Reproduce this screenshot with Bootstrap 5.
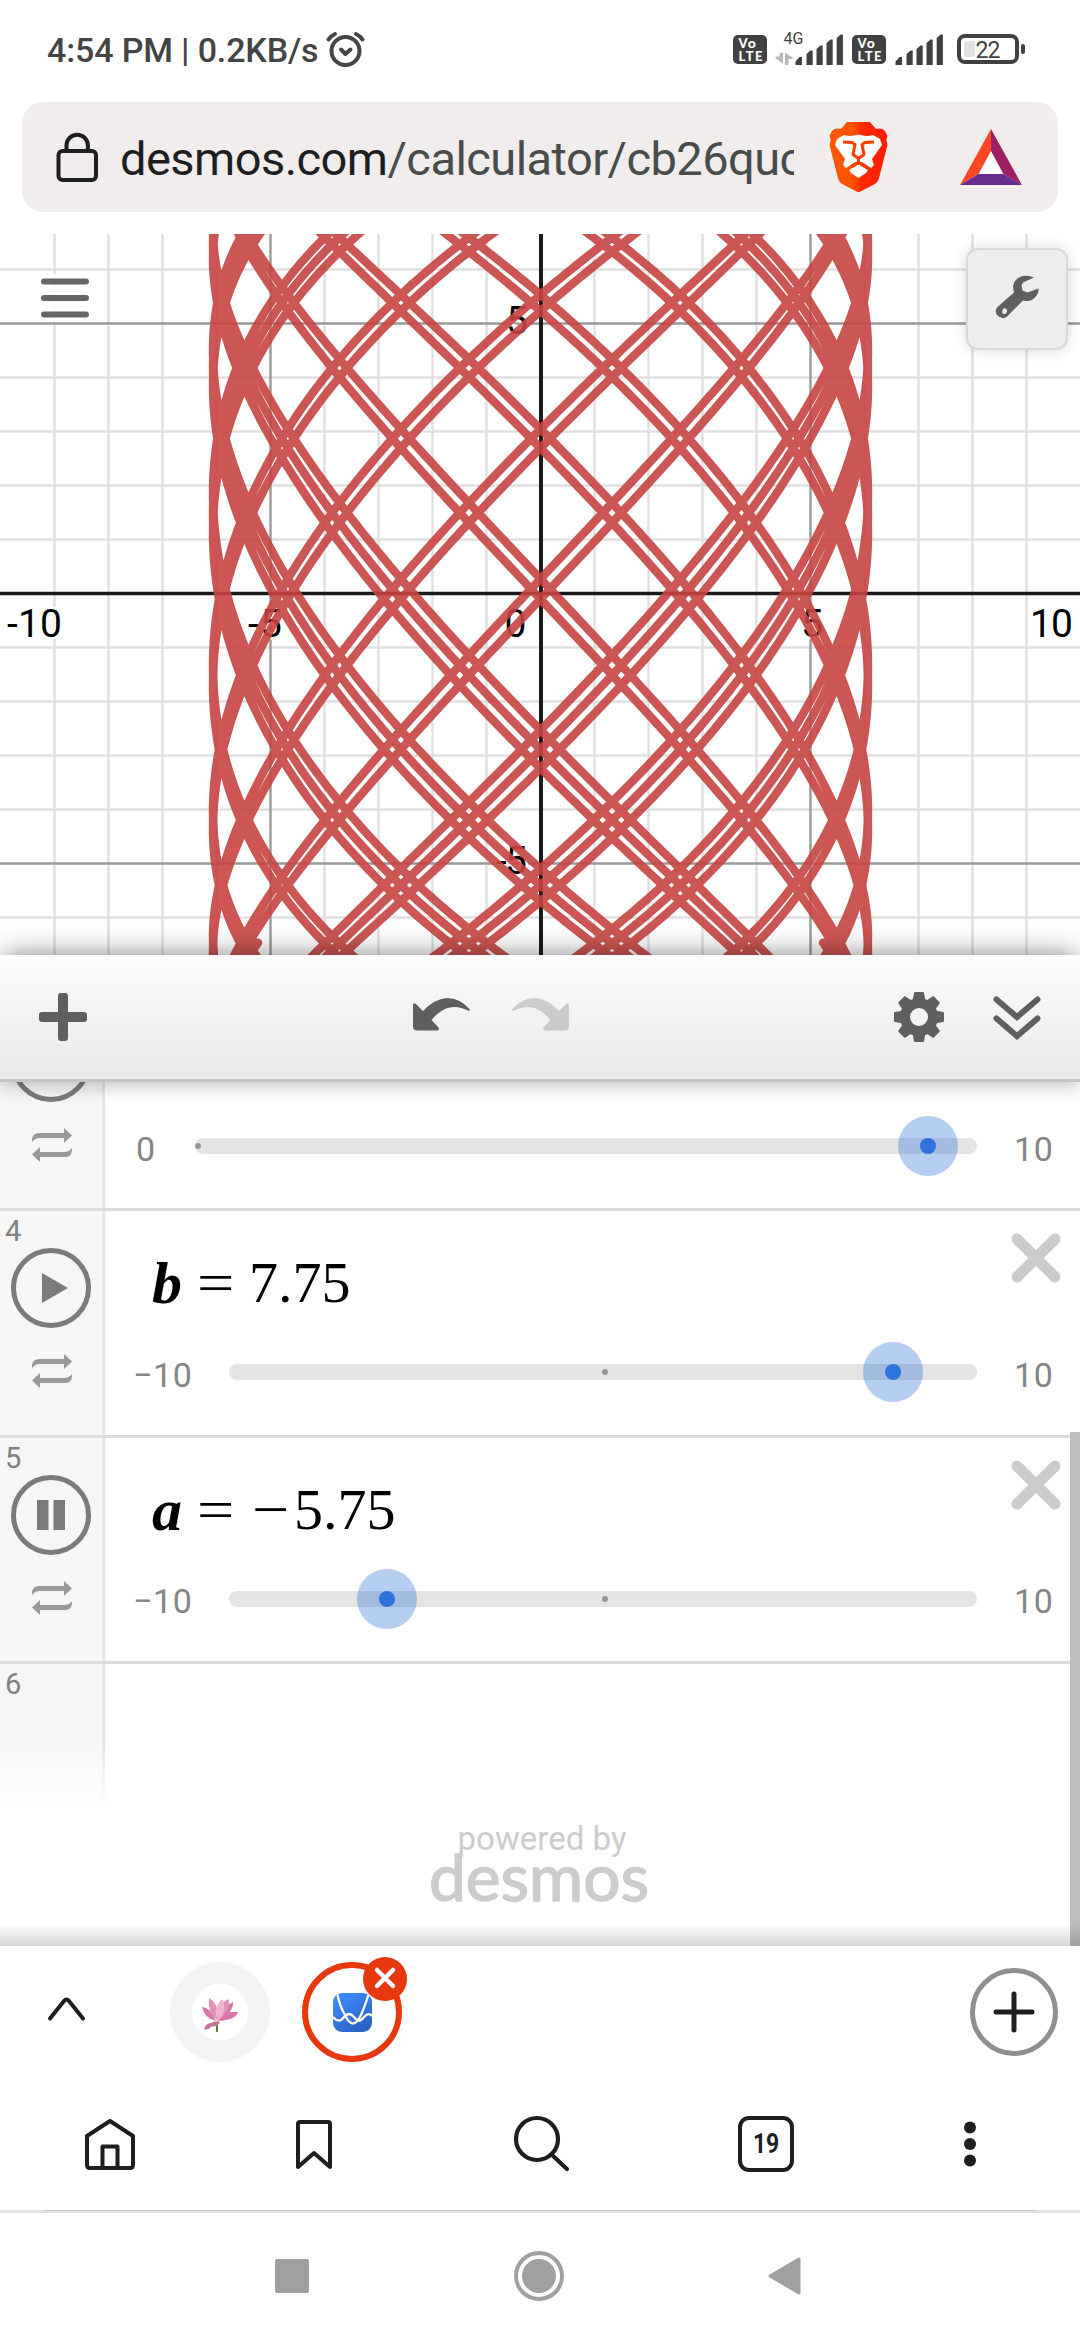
<!DOCTYPE html>
<html lang="en">
<head>
<meta charset="utf-8">
<meta name="viewport" content="width=device-width, initial-scale=1">
<title>Desmos | Graphing Calculator</title>
<link href="https://cdn.jsdelivr.net/npm/bootstrap@5.3.0/dist/css/bootstrap.min.css" rel="stylesheet">
<style>
  body { font-family: Roboto, "Noto Sans", sans-serif; background: #fff; width: 1080px; height: 2340px; overflow: hidden; line-height: 1; }
  svg { display: block; flex: none; overflow: visible; }
  .statusbar { height: 102px; padding: 0 54px 0 47px; color: #444; }
  .clock { font-size: 34px; font-weight: 500; width: 279px; white-space: nowrap; letter-spacing: -.15px; padding-bottom: 2px; }
  .urlbar { height: 110px; margin: 0 22px; border-radius: 21px; background: #f0edec; padding-left: 34px; }
  .urltext { width: 674px; margin-left: 22px; font-size: 47px; color: #484c4b; white-space: nowrap; overflow: hidden; line-height: 64px; letter-spacing: -.55px; padding-top: 3px; }
  .urltext b { font-weight: 400; color: #1e1e1e; }
  .graph { height: 721px; margin-top: 22px; position: relative; overflow: hidden; }
  .graph::after { content: ""; position: absolute; left: 8px; right: 8px; bottom: -24px; height: 24px; box-shadow: 0 0 26px 4px rgba(0,0,0,.34); }
  .menu-btn { position: absolute; left: 41px; top: 44px; }
  .wrench { position: absolute; left: 966px; top: 14px; width: 102px; height: 102px; border: 2px solid #d8d8d8; border-radius: 12px; background: #ededed; box-shadow: 0 0 14px rgba(0,0,0,.16); }
  .toolbar { height: 127px; background: linear-gradient(#fcfcfc, #e8e8e8); border-bottom: 3px solid #c4c4c4; box-shadow: 0 6px 16px rgba(0,0,0,.2); position: relative; z-index: 2; padding: 0 39px; }
  .pane { height: 864px; overflow: hidden; position: relative; }
  .exprs { margin-top: -97px; }
  .expr { height: 226.3px; border-bottom: 3px solid #dcdcdc; }
  .gutter { width: 105px; background: #f6f6f6; border-right: 3px solid #e6e6e6; color: #808080; flex: none; }
  .num { font-size: 29px; height: 37px; padding: 6px 0 0 5px; }
  .playb { width: 80px; height: 80px; border: 5px solid #7b7b7b; margin-left: 11px; }
  .latex { height: 130px; padding-left: 47px; font-family: "Liberation Serif", serif; font-size: 58px; color: #000; line-height: 58px; }
  .latex .v { font-weight: 700; font-style: italic; font-size: 60px; width: 45px; }
  .latex .eq { width: 52px; }
  .latex .neg { width: 45px; }
  .latex .eq span, .latex .neg span { display: inline-block; transform: scaleX(1.14); transform-origin: 0 50%; }
  .latex .neg span { margin-left: 3px; }
  .slider { height: 62px; font-size: 34px; color: #858585; }
  .lab { padding-top: 5px; letter-spacing: .6px; white-space: nowrap; }
  .trackbar { height: 16px; border-radius: 8px; background: #e4e4e4; position: relative; }
  .thumb { position: absolute; top: -22px; width: 60px; height: 60px; margin-left: -30px; border-radius: 50%; background: rgba(45,112,219,.35); }
  .thumb::after { content: ""; position: absolute; left: 22px; top: 22px; width: 16px; height: 16px; border-radius: 50%; background: #2f72dc; }
  .zero { position: absolute; top: 5px; width: 6px; height: 6px; border-radius: 50%; background: #979797; }
  .fade6 { height: 144px; background: linear-gradient(#f6f6f6 50%, #fff); border-image: linear-gradient(#e6e6e6 55%, #fff) 1; }
  .scroll { position: absolute; right: 0; top: 350px; width: 10px; bottom: 0; background: #bdbdbd; }
  .pane::after { content: ""; position: absolute; left: 0; right: 0; bottom: 0; height: 22px; background: linear-gradient(rgba(0,0,0,0), rgba(0,0,0,.16)); }
  .tabs { height: 132px; padding: 0 22px 0 48px; }
  .tabdot { width: 100px; height: 100px; flex: none; position: relative; }
  .t1 { background: #f2f3f5; margin-left: 85px; }
  .t1 span { width: 56px; height: 56px; background: #fff; }
  .t2 { border: 6px solid #e8380d; margin-left: 32px; }
  .closebadge { position: absolute; left: 55px; top: -11px; width: 44px; height: 44px; background: #e8380d; }
  .addtab { width: 88px; height: 88px; border: 5px solid #8f8f8f; }
  .nav5 { height: 132px; padding: 0 104px 0 85px; }
  .tabcount { width: 56px; height: 56px; border: 4px solid #1e1e1e; border-radius: 11px; font-size: 28px; font-weight: 700; color: #1e1e1e; }
  .tabcount span { transform: scaleX(.82); }
  .divline { height: 3px; background: #e2e2e2; border: 0; padding: 0 44px; }
  .divline i { display: block; height: 1px; background: #c6c6c6; }
  .sysnav { height: 127px; padding: 0 279px 2px 275px; }
</style>
</head>
<body>
<header class="statusbar d-flex align-items-center">
  <div class="clock">4:54 PM | 0.2KB/s</div>
  <svg style="margin-top:-3px" width="40" height="38" viewBox="326 31 40 38" fill="none" stroke="#444" stroke-width="4" stroke-linecap="round" stroke-linejoin="round"><circle cx="345.5" cy="51" r="14"/><path d="M341 49.5l4.500 4.500 5-4.500M328.500 39.500q3-4 6.500-5.500M362.500 39.500q-3-4-6.500-5.500"/></svg>
  <svg class="ms-auto" style="margin-top:-2px" width="294" height="38" viewBox="732 31 294 38" fill="#414141">
    <g id="volte"><rect x="733" y="35" width="34" height="29" rx="5"/><g fill="#fff" font-family="Lato" font-weight="900" font-size="13"><text x="738.500" y="48">V<tspan font-size="14">o</tspan></text><text x="738.500" y="61" textLength="24">LTE</text></g></g>
    <use href="#volte" x="119"/>
    <text x="783.500" y="44" font-size="16" font-weight="400">4G</text>
    <path fill="#b9b9b9" d="M779.500 53h3.500v11l-7.500-6v-1.500h4zM785 65h3.500v-6h4v-1.500l-7.500-5z"/>
    <g id="bars"><path d="M795.500 61.500l4-4.500h2.500v8h-6.500zM806.500 54l4-3.500h2.200v14.500h-6.200zM816.500 49l4-3.500h2.200v19.500h-6.200zM826.500 43l4-3.500h2.200v25.500h-6.200zM836.700 38l4-3.500h2.200v30.500h-6.200z"/></g>
    <use href="#bars" x="100"/>
    <rect x="959" y="36" width="58" height="26" rx="6" fill="none" stroke="#414141" stroke-width="4"/>
    <rect x="964" y="41" width="11" height="16" rx="3" fill="#e2e2e2"/><rect x="1021" y="44" width="4" height="10" rx="2"/>
    <text x="975.500" y="58" font-size="23" textLength="25">22</text>
  </svg>
</header>

<div class="urlbar d-flex align-items-center">
  <svg width="42" height="52" viewBox="56 131 42 52" fill="none" stroke="#1e1e1e" stroke-width="4"><rect x="58.500" y="151" width="37.500" height="29" rx="4"/><path d="M66.500 150v-4.500a10.700 10.700 0 0 1 21.400 0v4.500"/></svg>
  <div class="urltext"><b>desmos.com</b>/calculator/cb26quc</div>
  <svg style="margin-left:35px" width="59" height="70" viewBox="0 0 59 70">
    <defs><linearGradient id="lion"><stop offset="0" stop-color="#ff5500"/><stop offset=".42" stop-color="#ff5200"/><stop offset=".55" stop-color="#ff2a00"/><stop offset="1" stop-color="#ff1c00"/></linearGradient></defs>
    <path fill="url(#lion)" d="M18 0h23l6 7q6-1.500 9 2l2.500 5-1.200 4 1.200 5L50 56q-1 4-5 6.500L31.500 69.500q-2 1-4 0L14 62.500Q10 60 9 56L.5 23 1.700 18 .5 14 3 9q3-3.500 9-2z"/>
    <path fill="#fff" d="M8 17l7-4q7 2 14.500-.5Q37 15 44 13l7 4 2 6-10 14 2 6-3 3-9-6-3.500 1.500L26 40l-9 6-3-3 2-6L6 23z"/>
    <path fill="#fff" d="M20 48l9.500-5.500 9.500 5.500-2 3-7.500 5-7.500-5z"/>
    <path fill="none" stroke="#ff3d00" stroke-width="3" stroke-linejoin="round" d="M14 20l9 .5 3 2-2 10 5.500 4 5.500-4-2-10 3-2 9-.5M29.500 36v5M22 45l7.500-4.500 7.500 4.500"/>
  </svg>
  <svg style="margin-left:72px" width="62" height="56" viewBox="0 0 62 56"><path fill="#fff" d="M31 20L43 46H19z"/><path fill="#ff4724" d="M31 0v22L18.500 45 0 56z"/><path fill="#9e1f63" d="M31 0v22l12.500 23L62 56z"/><path fill="#662d91" d="M0 56l18.500-11h25L62 56z"/></svg>
</div>

<main>
<section class="graph">
  <svg id="plot" width="1080" height="721" viewBox="0 234 1080 721">
    <g id="minor" stroke="#e0e0e0" stroke-width="2.400"></g>
    <g id="major" stroke="#999" stroke-width="2.400"></g>
    <path d="M0 593.500H1080" stroke="#1a1a1a" stroke-width="3.500"/><path d="M541 234V955" stroke="#1a1a1a" stroke-width="4"/>
    <g font-family="Roboto" font-size="39" font-weight="400" fill="#000" stroke="#fff" stroke-width="5" paint-order="stroke" lengthAdjust="spacingAndGlyphs">
      <text x="7" y="637" textLength="55">-10</text><text x="248" y="637" textLength="34">-5</text><text x="504.500" y="637" textLength="22">0</text><text x="801" y="637" textLength="21">5</text><text x="1030" y="637" textLength="43">10</text>
      <text x="506" y="334" textLength="21">5</text><text x="496" y="874" textLength="31">-5</text>
    </g>
    <path id="curve" fill="none" stroke="#c74440" stroke-opacity=".9" stroke-width="8.400" stroke-linecap="round" stroke-linejoin="round"/>
  </svg>
  <svg class="menu-btn" width="48" height="40" viewBox="0 0 48 40"><path fill="#fff" fill-opacity=".8" d="M-4-4h56v48h-56z"/><path stroke="#666" stroke-width="6" stroke-linecap="round" d="M3 3.500h42M3 20h42M3 36.500h42"/></svg>
  <div class="wrench d-flex align-items-center justify-content-center">
    <svg width="44" height="44" viewBox="0 0 44 44" style="margin-top:-4px"><path fill="#5f5f5f" fill-rule="evenodd" d="M39 2.500Q32-.5 25 2q-7 3.500-7 10l1 5.500L2.500 32q-3.500 4-.5 8 5 5 9.500 2L28 25.500q7 2 12-3 4-4 3.500-9l-11 4-5-2-1-5 1.500-3z M9.500 33a3 3 0 1 1-2 5.500q-1-4 2-5.500z"/></svg>
  </div>
</section>

<nav class="toolbar d-flex align-items-center">
  <svg width="48" height="48" viewBox="0 0 48 48"><path fill="#5f5f5f" d="M22 0h4q3 0 3 3v16h16q3 0 3 3v4q0 3-3 3H29v16q0 3-3 3h-4q-3 0-3-3V29H3q-3 0-3-3v-4q0-3 3-3h16V3q0-3 3-3z"/></svg>
  <svg style="margin:-6px 0 0 326px" width="57" height="33" viewBox="0 0 57 33"><path id="undo" fill="#5f5f5f" d="M0 6.500Q1 4 4 7l6 6Q21 1 34 0q13 0 23 11.500-.5 2-2 1Q43 6.500 33 10.500 25 14 18.500 22l7 7.500q1 2.500-1 3H4q-4 0-4-4z"/></svg>
  <svg style="margin:-6px 0 0 42px" width="57" height="33" viewBox="0 0 57 33"><use href="#undo" transform="matrix(-1 0 0 1 57 0)" opacity=".27"/></svg>
  <svg style="margin-left:325px" width="50" height="50" viewBox="-25 -25 50 50"><g fill="#5f5f5f"><g id="tooth"><path id="tt" d="M-4-25h8q1 0 1 1l1.500 8h-13l1.500-8q0-1 1-1z"/><use href="#tt" transform="rotate(180)"/></g><use href="#tooth" transform="rotate(45)"/><use href="#tooth" transform="rotate(90)"/><use href="#tooth" transform="rotate(135)"/></g><circle r="14" fill="none" stroke="#5f5f5f" stroke-width="10"/></svg>
  <svg style="margin:1px 0 0 49px" width="48" height="44" viewBox="0 0 48 44" fill="none" stroke="#5f5f5f" stroke-width="6" stroke-linecap="round"><path d="M3.500 3.500L24 21 44.500 3.500M3.500 22.500L24 40 44.500 22.500"/></svg>
</nav>

<section class="pane">
  <div class="exprs">
    <div class="expr d-flex">
      <div class="gutter"><div class="num">&nbsp;</div><div class="playb rounded-circle"></div><svg style="margin:26px 0 0 32px" width="40" height="34" viewBox="0 0 40 34"><g id="loop" fill="#999"><path d="M0 14V11Q1 5 7 5H32V0l8 7.500-8 7.500V10H8Q3 10 0 14z"/><path d="M40 20v3q-1 6-7 6H8v5L0 26.500 8 19v5H32q5 0 8-4z"/></g></svg></div>
      <div class="flex-grow-1"><div class="latex"></div>
        <div class="slider d-flex align-items-center"><div class="lab" style="width:90px;padding-left:31px">0</div><div class="trackbar" style="width:782px"><i class="zero" style="left:0"></i><i class="thumb" style="left:733px"></i></div><div class="lab" style="margin-left:37px">10</div></div></div>
    </div>
    <div class="expr d-flex">
      <div class="gutter"><div class="num">4</div><div class="playb rounded-circle d-flex align-items-center justify-content-center"><svg width="26" height="30" viewBox="0 0 26 30" style="margin-left:7px"><path fill="#7b7b7b" d="M0 0l26 15L0 30z"/></svg></div><svg style="margin:26px 0 0 32px" width="40" height="34"><use href="#loop"/></svg></div>
      <div class="flex-grow-1"><div class="latex d-flex justify-content-start" style="padding-top:43px"><span class="v">b</span><span class="eq"><span>=</span></span><span>7.75</span><svg class="ms-auto" style="margin:-21px 19px 0 0" width="50" height="50" viewBox="0 0 50 50"><path id="xx" stroke="#cbcbcb" stroke-width="11" stroke-linecap="round" d="M6 6l38 38M44 6L6 44"/></svg></div>
        <div class="slider d-flex align-items-center"><div class="lab" style="width:124px;padding-left:28px">−10</div><div class="trackbar" style="width:748px"><i class="zero" style="left:373px"></i><i class="thumb" style="left:664px"></i></div><div class="lab" style="margin-left:37px">10</div></div></div>
    </div>
    <div class="expr d-flex">
      <div class="gutter"><div class="num">5</div><div class="playb rounded-circle d-flex align-items-center justify-content-center"><svg width="28" height="30"><path fill="#7b7b7b" d="M0 0h11.500v30H0zM16.500 0H28v30H16.500z"/></svg></div><svg style="margin:26px 0 0 32px" width="40" height="34"><use href="#loop"/></svg></div>
      <div class="flex-grow-1"><div class="latex d-flex justify-content-start" style="padding-top:43px"><span class="v">a</span><span class="eq"><span>=</span></span><span class="neg"><span>−</span></span><span>5.75</span><svg class="ms-auto" style="margin:-21px 19px 0 0" width="50" height="50"><use href="#xx"/></svg></div>
        <div class="slider d-flex align-items-center"><div class="lab" style="width:124px;padding-left:28px">−10</div><div class="trackbar" style="width:748px"><i class="zero" style="left:373px"></i><i class="thumb" style="left:158px"></i></div><div class="lab" style="margin-left:37px">10</div></div></div>
    </div>
    <div class="gutter fade6"><div class="num">6</div></div>
  </div>
  <div class="d-flex flex-column align-items-center">
    <svg width="216" height="90" viewBox="430 1815 216 90" fill="#ccc" style="margin-top:7px"><text x="455.500" y="1849.500" font-size="33" textLength="169">powered by</text><text x="427" y="1901" font-family="Lato" font-size="64" font-weight="400" stroke="#ccc" stroke-width="1.500" stroke-linejoin="round" textLength="220" lengthAdjust="spacingAndGlyphs">desmos</text></svg>
  </div>
  <div class="scroll"></div>
</section>
</main>

<footer>
<div class="tabs d-flex align-items-center">
  <svg width="37" height="24" viewBox="0 0 37 24" style="margin-top:-6px" fill="none" stroke="#1e1e1e" stroke-width="4" stroke-linecap="round" stroke-linejoin="round"><path d="M2 21.500L16 4q2.500-3 5 0L35 21.500"/></svg>
  <div class="tabdot t1 rounded-circle d-flex align-items-center justify-content-center"><span class="rounded-circle d-flex align-items-center justify-content-center">
    <svg width="36" height="34" viewBox="0 0 36 34" style="margin-top:6px"><path fill="#5c7a35" d="M14 26l2-4v12h-2z"/><path fill="#d978a8" d="M0 9q8 0 14 14Q2 20 0 9zM36 14q-2 8-20 9Q24 12 36 14zM31 4q1 10-14 19Q18 10 31 4z"/><path fill="#e391b8" d="M7 0q11 7 9 23Q5 14 7 0zM27 1q1 12-11 22Q15 5 27 1z"/><path fill="#f0b3cd" d="M20 1q6 10-4 22-6-12 4-22z"/><path fill="#c9709b" d="M18 24q-2 5-9 4.500Q6 33 2 31q2-6 7-6 4-3 9-1z"/></svg></span></div>
  <div class="tabdot t2 rounded-circle d-flex align-items-center justify-content-center">
    <svg width="39" height="39" viewBox="0 0 39 39"><defs><linearGradient id="dg" x2=".6" y2="1"><stop offset=".2" stop-color="#3a87fb"/><stop offset="1" stop-color="#2a64c4"/></linearGradient><clipPath id="dc"><rect width="39" height="39" rx="9"/></clipPath></defs><rect width="39" height="39" rx="9" fill="url(#dg)"/><path clip-path="url(#dc)" fill="none" stroke="#fff" stroke-width="2.300" d="M4 0q3 14 8 22 8 17 16 0 4-9 8-22M0 24q6 7 11 0 5-6 10 0 5 7 10 0 4-5 8-1"/></svg>
    <span class="closebadge rounded-circle d-flex align-items-center justify-content-center"><svg width="22" height="22" viewBox="0 0 22 22" style="margin-top:-2px"><path stroke="#fff" stroke-width="4.500" stroke-linecap="round" d="M3 3l16 16M19 3L3 19"/></svg></span></div>
  <div class="addtab ms-auto rounded-circle d-flex align-items-center justify-content-center"><svg width="42" height="42" viewBox="0 0 42 42"><path stroke="#1e1e1e" stroke-width="5" stroke-linecap="round" d="M3 21h36M21 3v36"/></svg></div>
</div>
<div class="nav5 d-flex align-items-center">
  <svg width="50" height="51" viewBox="0 0 50 51" fill="none" stroke="#1e1e1e" stroke-width="4" stroke-linejoin="round"><path d="M2 17L25 2l23 15v29q0 3-3 3H5q-3 0-3-3zM17.500 49V27.500h15V49"/></svg>
  <svg style="margin-left:161px" width="36" height="51" viewBox="0 0 36 51" fill="none" stroke="#1e1e1e" stroke-width="4" stroke-linejoin="round"><path d="M2 5q0-2 2-2h28q2 0 2 2v43L18 34 2 48z"/></svg>
  <svg style="margin-left:181px" width="56" height="56" viewBox="0 0 56 56" fill="none" stroke="#1e1e1e" stroke-width="4.200" stroke-linecap="round"><circle cx="24" cy="23" r="21"/><path d="M38.500 38.500L54 53"/></svg>
  <div class="tabcount d-flex align-items-center justify-content-center" style="margin-left:169px"><span>19</span></div>
  <svg class="ms-auto" width="12" height="46" viewBox="0 0 12 46" fill="#1e1e1e"><circle cx="6" cy="6.500" r="6"/><circle cx="6" cy="23" r="6"/><circle cx="6" cy="39.500" r="6"/></svg>
</div>
<div class="divline"><i></i></div>
<div class="sysnav d-flex align-items-center justify-content-between">
  <svg width="34" height="34"><rect width="34" height="34" rx="2" fill="#a0a0a0"/></svg>
  <svg width="50" height="50" viewBox="-25 -25 50 50"><circle r="23" fill="none" stroke="#a0a0a0" stroke-width="4"/><circle r="17" fill="#a0a0a0"/></svg>
  <svg width="33" height="38" viewBox="0 0 33 38"><path fill="#a0a0a0" stroke="#a0a0a0" stroke-width="3" stroke-linejoin="round" d="M2 19L31 2v34z"/></svg>
</div>
</footer>

<script src="https://cdn.jsdelivr.net/npm/bootstrap@5.3.0/dist/js/bootstrap.bundle.min.js"></script>
<script>
  // Graph paper: one unit is 54px, origin at (540.5, 594)
  const U = 54, OX = 540.5, OY = 594;
  let minor = '', major = '';
  for (let n = -9; n <= 9; n++) {
    if (!n) continue;
    const x = OX + n * U;
    const l = `<path d="M${x} 234V955"/>`;
    n % 5 ? minor += l : major += l;
  }
  for (let n = -6; n <= 6; n++) {
    if (!n) continue;
    const l = `<path d="M0 ${OY - .5 - n * U}H1080"/>`;
    n % 5 ? minor += l : major += l;
  }
  document.getElementById('minor').innerHTML = minor;
  document.getElementById('major').innerHTML = major;
  // Parametric curve for t in [-10, 10]
  let d = '';
  for (let i = -5000; i <= 5000; i++) {
    const t = i / 500;
    d += (d ? 'L' : 'M') + (OX + 6.065 * U * Math.sin(7.75 * t)).toFixed(2) + ' ' + (OY - 9.2 * U * Math.cos(5.42 * t)).toFixed(2);
  }
  document.getElementById('curve').setAttribute('d', d);
</script>
</body>
</html>
